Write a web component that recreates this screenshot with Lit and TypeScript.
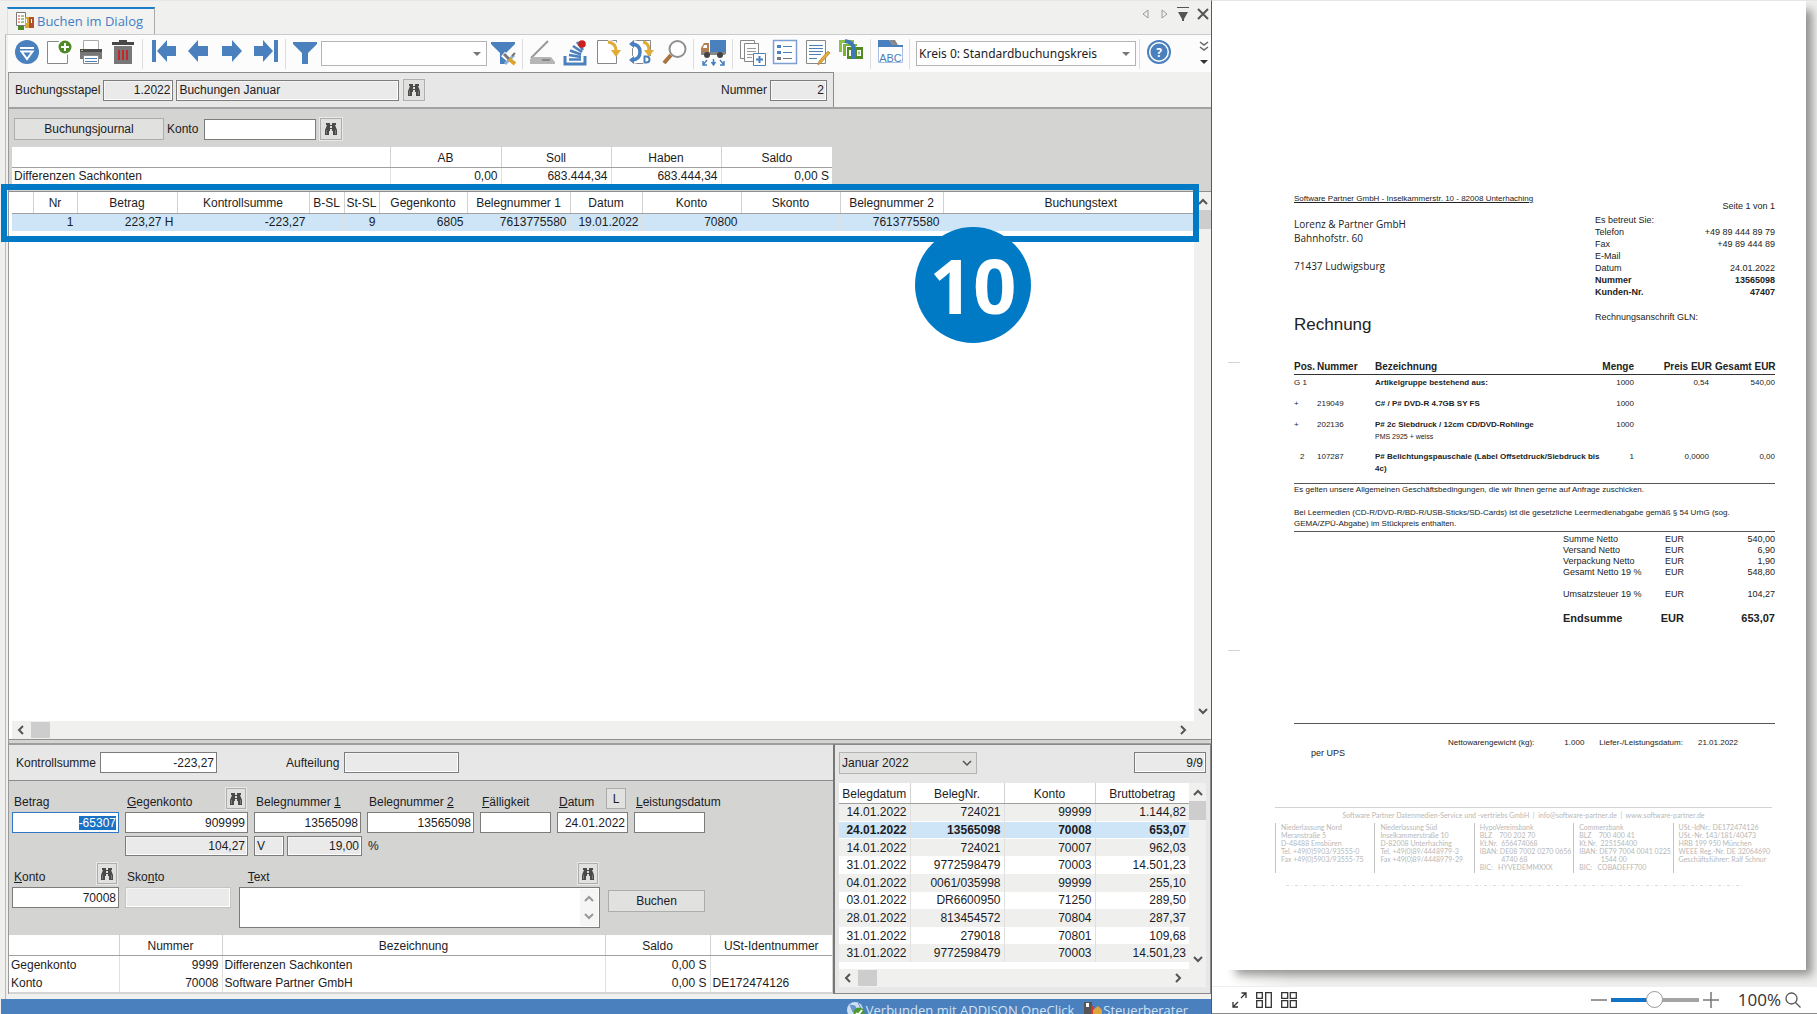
import { LitElement, html, css, svg, nothing } from "lit";
import { customElement } from "lit/decorators.js";
import { classMap } from "lit/directives/class-map.js";

const BLUE = "#4a80be";

const icon = (w: number, h: number, body: unknown) =>
  html`<svg width=${w} height=${h} viewBox="0 0 ${w} ${h}" aria-hidden="true">${body}</svg>`;

const binoculars = icon(12, 12, svg`
  <path fill="#4a4a4a" d="M1 0h4v2h2V0h4v2h-1l2 5v5H8V8H7V6H5v2H4v4H0V7l2-5H1z"/>
  <path fill="#ddd" d="M5 3h2v2H5z"/><path stroke="#aaa" d="M1.500 7v4M10.500 7v4" opacity=".5"/>`);

const money = svg`
  <path fill="#8cbf45" d="M0 0h15v4H3v8H0z"/><path fill="#fff" d="M3 3h15v1H4v12H3z"/>
  <path fill="#7ab336" d="M4 4h14v3H7v9H4z"/><path fill="#fff" d="M7 6h15v1H8v12H7z"/>
  <path fill="#4f8a22" d="M8 7h16v12H8z"/>
  <path d="M6 1q9 1 9 9v9" fill="none" stroke="#3f79b5" stroke-width="4"/>
  <path fill="#fff" d="M10 10h2v6h-2zM18 10h4v6h-4z"/><path fill="#4f8a22" d="M19.500 11.500h1v3h-1z"/>`;

const I = {
  menu: svg`<circle cx="12" cy="12" r="12" fill=${BLUE}/><path stroke="#fff" stroke-width="2" d="M5 8h14"/>
    <path d="M6.500 11.500h11L12 19z" fill=${BLUE} stroke="#fff" stroke-width="2"/>`,
  add: svg`<path d="M.5 1.500h20v22H.5z" fill="#fff" stroke="#888"/><circle cx="18" cy="7" r="8" fill="#fff"/><circle cx="18" cy="7" r="6.500" fill="#4d8a25"/>
    <path d="M18 3v8M14 7h8" stroke="#fff" stroke-width="2"/>`,
  print: svg`<path d="M4.500.5h15v10h-15z" fill="#fff" stroke="#aaa"/><path d="M1 9h22v10H1z" fill="#777"/><path d="M1 9h22v3H1z" fill="#4c4c4c"/>
    <path d="M2 10h2v1H2z" fill="#8c4"/><path d="M4.500 15.500h15v8h-15z" fill="#fff" stroke="#888"/><path d="M6 18.500h12M6 21.500h12" stroke=${BLUE}/>`,
  trash: svg`<path d="M1 2h22v3H1zM8 0h8v3H8z" fill="#484848"/><path d="M3 6h18v18H3z" fill="#777"/>
    <path d="M8 10v10M12 10v10M16 10v10" stroke="#c3262b" stroke-width="2"/>`,
  first: svg`<path fill=${BLUE} d="M0 0h4v22H0zM5 11L15 0v6h9v10h-9v6z"/>`,
  prev: svg`<path fill=${BLUE} d="M2 11L12 0v6h10v10H12v6z"/>`,
  next: svg`<path fill=${BLUE} d="M22 11L12 0v6H2v10h10v6z"/>`,
  last: svg`<path fill=${BLUE} d="M20 0h4v22h-4zM19 11L9 0v6H0v10h9v6z"/>`,
  filter: svg`<path fill=${BLUE} d="M0 2h24v2l-9 9v11H9V13L0 4z"/>`,
  filterTools: svg`<path fill=${BLUE} d="M0 2h24v2l-9 9v11H9V13L0 4z"/><path d="M12 14l12 10" stroke="#fff" stroke-width="6"/>
    <path d="M14 24l9-9" stroke="#8bb0dc" stroke-width="3"/><path d="M13 14l5 5" stroke="#777" stroke-width="3"/><path d="M18 19l6 5" stroke="#dba52f" stroke-width="4"/>
    <path d="M21 16l3-3" stroke="#777" stroke-width="2"/>`,
  scan: svg`<path d="M1 18L18 1" stroke="#999" stroke-width="2"/><path d="M0 19l4-2h17l4 5v2H0z" fill="#b5b5b5"/><path d="M12 20h8" stroke="#888" stroke-width="2"/>`,
  stack: svg`<path d="M2 16v8h20v-8" fill="none" stroke=${BLUE} stroke-width="3"/>
    <path d="M6 19.500h12M6 15l12 2M7 10.500l11 4M10 6l9 6M14 2l6 8" stroke=${BLUE} stroke-width="2.600"/><circle cx="19" cy="4" r="3.800" fill="#cf1f1c"/>`,
  docArrow: svg`<path d="M1.500.5h19v23h-19z" fill="#fff" stroke="#888"/><path d="M12 3q9 0 9 8" fill="none" stroke="#fff" stroke-width="6"/>
    <path d="M12 2q8 1 8 9" fill="none" stroke="#dfac35" stroke-width="3"/><path d="M15 10h10l-5 7z" fill="#dfac35"/>`,
  docSync: svg`<path d="M3.500.5h18v23h-18z" fill="#fff" stroke="#888"/><path d="M2 4q9 0 9 8t-9 8" fill="none" stroke="#fff" stroke-width="8"/><path d="M2 4q9 0 9 8t-9 8" fill="none" stroke=${BLUE} stroke-width="3.500"/>
    <path d="M0 4l5-4v8zM0 20l5-4v8z" fill=${BLUE}/><path d="M14 2q6 1 6 9" fill="none" stroke="#dfac35" stroke-width="3"/><path d="M15 10h10l-5 7z" fill="#dfac35"/>
    <path d="M14 16h8v8h-8z" fill="#fff"/><path d="M15.500 16.500h2q3 0 3 3t-3 3h-2z" fill="none" stroke=${BLUE} stroke-width="2"/>`,
  search: svg`<path d="M2 23l7-8" stroke="#a9743f" stroke-width="4"/><circle cx="15.500" cy="9" r="8" fill="#fff" stroke="#8f8f8f" stroke-width="2"/>`,
  truck: svg`<path d="M9 0h16v14H9z" fill=${BLUE}/><path d="M0 13V8l3-5h5v11H0z" fill="#b3814f"/><path d="M3 5h3v3H2z" fill="#fff"/><path d="M0 12h24v3H0z" fill="#888"/>
    <circle cx="6" cy="15" r="3" fill="#444"/><circle cx="19" cy="15" r="3" fill="#444"/>
    <path d="M6 20l-4 5m0-4v4h4M12.500 19v6m-2-3l2 3 2-3M19 20l4 5m0-4v4h-4" fill="none" stroke=${BLUE} stroke-width="1.500"/>`,
  copy: svg`<path d="M.5.5h14v18H.5z" fill="#fff" stroke="#888"/><path d="M4.500 3.500h14v18h-14z" fill="#fff" stroke="#888"/><path d="M7 8.500h9M7 11.500h9M7 14.500h6M7 17.500h5" stroke="#999"/>
    <path d="M13.500 13.500h12v12h-12z" fill="#fff" stroke=${BLUE}/><path d="M19.500 16v7M16 19.500h7" stroke=${BLUE} stroke-width="2"/>`,
  list: svg`<path d="M.5.500h23v23H.5z" fill="#fff" stroke="#7f9fd2" stroke-width="1.500"/><path d="M4 5h4v3H4zM4 11h4v3H4z" fill=${BLUE}/><path d="M4 17h4v3H4z" fill="#777"/>
    <path d="M10 6.500h9M10 12.500h9" stroke=${BLUE}/><path d="M10 18.500h9" stroke="#777"/>`,
  note: svg`<path d="M.5.500h19v23H.5z" fill="#fff" stroke="#888"/><path d="M3 5.500h14M3 8.500h14M3 11.500h14M3 14.500h12M3 18.500h8" stroke=${BLUE}/>
    <path d="M24 13l-9 10-3 2 1-4 9-10z" fill="#dfac35" stroke="#a9743f" stroke-width=".6"/>`,
  abc: svg`<path d="M.5 5.500h24v17H.500z" fill="#fff" stroke="#a9bfe2"/><path d="M0 0h11l4 5h10v2H0z" fill=${BLUE}/><path d="M11 0h6l3 5h-5z" fill="#888"/>
    <text x="12.500" y="22" font-size="11" font-family="Liberation Sans" text-anchor="middle" fill=${BLUE}>ABC</text>`,
  help: svg`<circle cx="12" cy="12" r="11" fill="#fff" stroke=${BLUE} stroke-width="2"/><circle cx="12" cy="12" r="8.500" fill=${BLUE}/>
    <text x="12" y="16.500" font-size="12" font-weight="bold" font-family="Noto Sans" text-anchor="middle" fill="#fff">?</text>`,
};

const tool = (label: string, body: unknown) => html`<button class="tool" aria-label=${label}>${icon(26, 26, body)}</button>`;
const find = (label: string) => html`<button class="find" aria-label=${label}>${binoculars}</button>`;
const chevron = (dir: "up" | "down" | "left" | "right") => {
  const d = { up: "M1 7l4-4 4 4", down: "M1 3l4 4 4-4", left: "M7 1L3 5l4 4", right: "M3 1l4 4-4 4" }[dir];
  return icon(10, 10, svg`<path d=${d} fill="none" stroke="#555" stroke-width="2"/>`);
};

const BOOKING_COLS: [string, string, number][] = [
  ["", "", 21], ["Nr", "1", 44], ["Betrag", "223,27 H", 100], ["Kontrollsumme", "-223,27", 132], ["B-SL", "", 35],
  ["St-SL", "9", 35], ["Gegenkonto", "6805", 88], ["Belegnummer 1", "7613775580", 103], ["Datum", "19.01.2022", 72],
  ["Konto", "70800", 99], ["Skonto", "", 99], ["Belegnummer 2", "7613775580", 103], ["Buchungstext", "", 0],
];

const VOUCHERS = [
  ["14.01.2022", "724021", "99999", "1.144,82"],
  ["24.01.2022", "13565098", "70008", "653,07"],
  ["14.01.2022", "724021", "70007", "962,03"],
  ["31.01.2022", "9772598479", "70003", "14.501,23"],
  ["04.01.2022", "0061/035998", "99999", "255,10"],
  ["03.01.2022", "DR6600950", "71250", "289,50"],
  ["28.01.2022", "813454572", "70804", "287,37"],
  ["31.01.2022", "279018", "70801", "109,68"],
  ["31.01.2022", "9772598479", "70003", "14.501,23"],
];

const INFO: [string, string, boolean][] = [
  ["Es betreut Sie:", "", false], ["Telefon", "+49 89 444 89 79", false], ["Fax", "+49 89 444 89", false], ["E-Mail", "", false],
  ["Datum", "24.01.2022", false], ["Nummer", "13565098", true], ["Kunden-Nr.", "47407", true],
];

const ITEMS = [
  { pos: "G 1", nr: "", text: "Artikelgruppe bestehend aus:", note: "", qty: "1000", price: "0,54", sum: "540,00" },
  { pos: "+", nr: "219049", text: "C# / P# DVD-R 4.7GB SY FS", note: "", qty: "1000", price: "", sum: "" },
  { pos: "+", nr: "202136", text: "P# 2c Siebdruck / 12cm CD/DVD-Rohlinge", note: "PMS 2925 + weiss", qty: "1000", price: "", sum: "" },
  { pos: "2", nr: "107287", text: "P# Belichtungspauschale (Label Offsetdruck/Siebdruck bis 4c)", note: "", qty: "1", price: "0,0000", sum: "0,00" },
];

const TOTALS = [
  ["Summe Netto", "540,00", ""], ["Versand Netto", "6,90", ""], ["Verpackung Netto", "1,90", ""], ["Gesamt Netto 19 %", "548,80", ""],
  ["Umsatzsteuer 19 %", "104,27", "tax"], ["Endsumme", "653,07", "grand"],
];

const IMPRINT = [
  ["Niederlassung Nord", "Meranstraße 5", "D-48488 Emsbüren", "Tel. +49(0)5903/93555-0", "Fax +49(0)5903/93555-75"],
  ["Niederlassung Süd", "Inselkammerstraße 10", "D-82008 Unterhaching", "Tel. +49(0)89/4448979-3", "Fax +49(0)89/4448979-29"],
  ["HypoVereinsbank", "BLZ    700 202 70", "Kt.Nr.  656474068", "IBAN: DE08 7002 0270 0656", "            4740 68", "BIC:   HYVEDEMMXXX"],
  ["Commerzbank", "BLZ    700 400 41", "Kt.Nr.  225154400", "IBAN: DE79 7004 0041 0225", "            1544 00", "BIC:   COBADEFF700"],
  ["USt.-IdNr.: DE172474126", "USt.-Nr. 143/181/40473", "HRB 199 950 München", "WEEE Reg.-Nr. DE 32064690", "Geschäftsführer: Ralf Schnur"],
];

@customElement("invoice-viewer")
export class InvoiceViewer extends LitElement {
  static styles = css`
    :host { display: flex; flex-direction: column; min-width: 0; background: #fff; font-family: "Liberation Sans", Arial, sans-serif; color: #222; box-sizing: border-box; border-top: 1px solid #e6e6e6; border-bottom: 1px solid #8a8a8a; }
    * { box-sizing: border-box; }
    .stage { flex: 1; min-height: 0; display: flex; padding: 0 11px 16px 14px; overflow: hidden; background: linear-gradient(90deg, #fff 0, #fff 14px, #efefed 80px); }
    .page { position: relative; flex: 1; min-width: 0; background: #fff; box-shadow: 8px 7px 9px -2px rgba(0, 0, 0, 0.4); padding: 192px 31px 0 49px; font-size: 9px; }
    .mark { position: absolute; left: 2px; width: 12px; height: 1px; background: #d5d5d5; }
    .mark.a { top: 361px; }
    .mark.b { top: 649px; }
    .sheet { padding-left: 19px; }
    .head { display: flex; justify-content: space-between; height: 167px; }
    .sender { font-size: 8px; line-height: 12px; text-decoration: underline; white-space: nowrap; }
    .address { margin: 12px 0 41px; font: 10px/14px "Open Sans", sans-serif; }
    h1 { margin: 0; font-size: 17px; line-height: 22px; font-weight: 400; }
    .meta { width: 180px; padding-top: 7px; line-height: 12px; }
    .pageno { text-align: right; margin-bottom: 2px; }
    .pair { display: flex; justify-content: space-between; height: 12px; }
    .bold { font-weight: 700; }
    .gln { margin-top: 13px; }
    table { border-collapse: collapse; table-layout: fixed; width: 100%; }
    th, td { padding: 0; text-align: left; vertical-align: top; }
    .r { text-align: right; }
    .items { font-size: 8px; line-height: 12px; }
    .items th { font-size: 10px; line-height: 14px; border-bottom: 1px solid #333; white-space: nowrap; }
    .items td { padding: 2px 0 7px; }
    .items .edge { padding-right: 6px; }
    .items th.cost { padding-right: 3px; }
    .items .indent { padding-left: 6px; }
    .items .name { font-weight: 700; }
    .note { font-size: 7px; line-height: 11px; font-weight: 400; }
    .terms { border-top: 1px solid #555; border-bottom: 1px solid #555; margin-top: 1px; height: 49px; font-size: 8px; line-height: 11px; white-space: nowrap; }
    .terms p { margin: 0 0 12px; }
    .totals { width: 212px; margin: 2px 0 0 auto; line-height: 11px; }
    .totals .tax td { padding-top: 11px; }
    .totals .grand td { padding-top: 11px; font-size: 11px; line-height: 14px; font-weight: 700; }
    .ship { margin-top: 98px; border-top: 1px solid #555; padding: 14px 0 0 17px; height: 84px; line-height: 10px; }
    .weights { display: flex; justify-content: flex-end; gap: 15px; padding-right: 37px; font-size: 8px; line-height: 10px; }
    .imprint { border-top: 1px solid #d2d2d2; margin-right: 3px; color: #b8b8b8; font: 7px/8px Lato, sans-serif; }
    .imprint .line { text-align: center; line-height: 14px; }
    .cols { display: grid; grid-template-columns: repeat(5, minmax(0, 1fr)); padding-top: 1px; }
    .cols div { border-left: 1px solid #c4c4c4; padding-left: 5px; height: 50px; white-space: pre; overflow: hidden; }
    .speck { height: 1px; margin: 12px 28px 0 11px; background: repeating-linear-gradient(90deg, #dcdcdc 0 3px, #fff 3px 5px, #e4e4e4 5px 6px, #fff 6px 9px); }
    .bar { height: 27px; display: flex; align-items: center; padding: 0 16px 1px 20px; gap: 9px; background: #fff; border-top: 1px solid #eee; font: 17px/20px "Open Sans", sans-serif; color: #333; }
    button { border: 0; background: none; padding: 0; display: flex; color: inherit; }
    .space { flex: 1; }
    .zoom { appearance: none; width: 88px; height: 18px; margin: 0 -5px; background: linear-gradient(90deg, #1174c4 50%, #a3a3a3 50%) center / 100% 4px no-repeat; }
    .zoom::-webkit-slider-thumb { appearance: none; width: 17px; height: 17px; border-radius: 50%; background: #fff; border: 1px solid #999; }
    output { margin: 0 -5px 0 10px; }
  `;

  render() {
    return html`
      <div class="stage">
        <article class="page">
          <i class="mark a"></i><i class="mark b"></i>
          <div class="sheet">
            <div class="head">
              <div>
                <div class="sender">Software Partner GmbH - Inselkammerstr. 10 - 82008 Unterhaching</div>
                <div class="address">Lorenz &amp; Partner GmbH<br />Bahnhofstr. 60<br /><br />71437 Ludwigsburg</div>
                <h1>Rechnung</h1>
              </div>
              <div class="meta">
                <div class="pageno">Seite 1 von 1</div>
                ${INFO.map(([k, v, b]) => html`<div class=${classMap({ pair: true, bold: b })}><span>${k}</span><span>${v}</span></div>`)}
                <div class="gln">Rechnungsanschrift GLN:</div>
              </div>
            </div>
            <table class="items">
              <colgroup><col style="width:23px" /><col style="width:58px" /><col /><col style="width:34px" /><col style="width:81px" /><col style="width:60px" /></colgroup>
              <thead><tr><th>Pos.</th><th>Nummer</th><th>Bezeichnung</th><th class="r">Menge</th><th class="r cost">Preis EUR</th><th class="r">Gesamt EUR</th></tr></thead>
              <tbody>
                ${ITEMS.map((i) => html`<tr>
                  <td class=${classMap({ indent: i.pos === "2" })}>${i.pos}</td><td>${i.nr}</td>
                  <td class="name">${i.text}${i.note ? html`<div class="note">${i.note}</div>` : nothing}</td>
                  <td class="r">${i.qty}</td><td class="r edge">${i.price}</td><td class="r">${i.sum}</td>
                </tr>`)}
              </tbody>
            </table>
            <div class="terms">
              <p>Es gelten unsere Allgemeinen Geschäftsbedingungen, die wir Ihnen gerne auf Anfrage zuschicken.</p>
              <p>Bei Leermedien (CD-R/DVD-R/BD-R/USB-Sticks/SD-Cards) ist die gesetzliche Leermedienabgabe gemäß § 54 UrhG (sog.<br />GEMA/ZPÜ-Abgabe) im Stückpreis enthalten.</p>
            </div>
            <table class="totals">
              <colgroup><col style="width:90px" /><col style="width:31px" /><col /></colgroup>
              <tbody>${TOTALS.map(([k, v, c]) => html`<tr class=${c}><td>${k}</td><td class="r">EUR</td><td class="r">${v}</td></tr>`)}</tbody>
            </table>
            <div class="ship">
              <div class="weights"><span>Nettowarengewicht (kg):</span><span></span><span>1.000</span><span>Liefer-/Leistungsdatum:</span><span>21.01.2022</span></div>
              per UPS
            </div>
          </div>
          <footer class="imprint">
            <div class="line">Software Partner Datenmedien-Service und -vertriebs GmbH &nbsp;|&nbsp; info@software-partner.de &nbsp;|&nbsp; www.software-partner.de</div>
            <div class="cols">${IMPRINT.map((c) => html`<div>${c.join("\n")}</div>`)}</div>
            <div class="speck"></div>
          </footer>
        </article>
      </div>
      <div class="bar">
        <button aria-label="Vollbild">${icon(15, 16, svg`<path d="M9 6l5-5M9.500 1H14v5M6 10l-5 5M1 10v5h5" fill="none" stroke="#333" stroke-width="1.300"/>`)}</button>
        <button aria-label="Seitenansicht">${icon(16, 16, svg`<path d="M.7.700h5.600v5.600H.7zM.7 8.700h5.600v6.600H.7zM9.700.700h5.600v14.600H9.700z" fill="none" stroke="#333" stroke-width="1.300"/>`)}</button>
        <button aria-label="Kachelansicht">${icon(16, 16, svg`<path d="M.7.700h6v5.600h-6zM.7 8.700h6v6.600h-6zM9.300.700h6v5.600h-6zM9.300 8.700h6v6.600h-6z" fill="none" stroke="#333" stroke-width="1.300"/>`)}</button>
        <span class="space"></span>
        <button aria-label="Verkleinern">${icon(16, 16, svg`<path d="M0 8h16" stroke="#777" stroke-width="1.500"/>`)}</button>
        <input class="zoom" type="range" min="0" max="200" .value=${"100"} aria-label="Zoom" />
        <button aria-label="Vergrößern">${icon(16, 16, svg`<path d="M0 8h16M8 0v16" stroke="#777" stroke-width="1.500"/>`)}</button>
        <output>100%</output>
        <button aria-label="Suchen">${icon(16, 16, svg`<circle cx="6.500" cy="6.500" r="5.500" fill="none" stroke="#555" stroke-width="1.300"/><path d="M10.500 10.500l5 5" stroke="#555" stroke-width="1.300"/>`)}</button>
      </div>
    `;
  }
}

@customElement("app-root")
export class AppRoot extends LitElement {
  static styles = css`
    :host { display: grid; grid-template-columns: minmax(0, 1212fr) minmax(0, 605fr); grid-template-rows: minmax(0, 1fr); height: 100vh; font: 12px/16px "Liberation Sans", Arial, sans-serif; color: #1c1c24; background: #f0f0ee; }
    * { box-sizing: border-box; }
    button, input, select, textarea { font: inherit; color: inherit; margin: 0; border-radius: 0; }
    .app { display: flex; flex-direction: column; min-width: 0; border-right: 1px solid #1a6aa8; border-top: 1px solid #e6e6e6; }
    .tabs { height: 33px; display: flex; justify-content: space-between; padding: 6px 2px 0 7px; }
    .tab { width: 148px; height: 27px; display: flex; align-items: center; gap: 2px; padding: 0 0 1px 8px; border: 0; border-top: 2px solid #1a7dc8; border-right: 1px solid #aaa; border-left: 1px solid #ddd; background: #f2f2f0; color: #3f7fc4; font: 13px/18px "Open Sans", sans-serif; white-space: nowrap; }
    .wins { display: flex; align-items: center; gap: 8px; height: 14px; }
    .wins button, .more { border: 0; background: none; padding: 0; display: flex; }
    .frame { flex: 1; min-height: 0; display: flex; flex-direction: column; margin-left: 5px; border-left: 1px solid #bbb; border-top: 1px solid #ccc; padding: 0 0 5px 2px; }
    .tools { height: 37px; flex: none; background: #fcfcfc; display: flex; align-items: center; padding: 0 2px 0 3px; }
    .tool { width: 32px; height: 32px; padding: 2px 0 0 4px; border: 0; background: none; display: flex; }
    .tool svg { overflow: visible; }
    .grp { display: flex; gap: 1px; }
    .grp.tight { gap: 0; }
    .grp.wide { gap: 2px; padding-left: 2px; }
    .sep { width: 1px; height: 30px; background: #ddd; margin: 0 3px; }
    .combo { position: relative; display: flex; }
    .combo select { appearance: none; width: 100%; height: 100%; border: 1px solid #b4b4b4; background: #fff; padding: 0 2px; font: 12px/20px "Open Sans", sans-serif; }
    .combo svg { position: absolute; right: 5px; top: 50%; margin-top: -5px; pointer-events: none; }
    .quick { width: 166px; height: 25px; }
    .circle { width: 220px; height: 25px; margin-left: 3px; }
    .circle select { font-family: "Noto Sans", sans-serif; }
    .more { flex-direction: column; gap: 5px; margin-left: auto; }
    .work { flex: 1; min-height: 0; display: flex; flex-direction: column; border-left: 1px solid #999; }
    .batch { height: 37px; flex: none; border-bottom: 2px solid #a2a2a2; }
    .batch-in { width: 825px; max-width: 100%; height: 35px; display: flex; align-items: center; gap: 3px; padding: 0 6px 0 6px; border: 1px solid #8c8c8c; border-width: 1px 1px 0 0; background: #e7e7e7; }
    label { white-space: nowrap; }
    input, textarea { border: 1px solid #7c7c7c; background: #fff; height: 21px; padding: 0 2px; min-width: 0; outline: 0; text-align: right; }
    input[readonly] { background: #eaeaea; box-shadow: inset -1px -1px #fff, inset 1px 1px #f6f6f6; }
    .left { text-align: left; }
    .push { margin-left: auto; }
    .find { width: 22px; height: 22px; flex: none; display: flex; align-items: center; justify-content: center; border: 1px solid #aeaeae; background: #e1e1e0; padding: 0; box-shadow: 0 0 0 1px #e9e9e9; }
    .batch-in .find { margin-left: 1px; }
    .btn { border: 1px solid #adadad; background: #e1e1e0; height: 22px; padding: 0; text-align: center; }
    .journal { flex: none; background: #d4d4d2; height: 82px; padding: 9px 0 0 3px; }
    .jrow { display: flex; align-items: center; gap: 3px; margin: 0 0 7px 2px; height: 22px; }
    .jrow label { width: 34px; }
    .jrow .find { margin-left: 1px; }
    table { border-collapse: collapse; table-layout: fixed; background: #fff; }
    th { font-weight: 400; text-align: center; padding: 2px 0 0; height: 21px; border-bottom: 1px solid #a0a0a0; border-left: 1px solid #d2d2d2; white-space: nowrap; }
    td { text-align: right; padding: 0 3px 0 2px; border-left: 1px solid #e0e0e0; white-space: nowrap; }
    th:first-child, td:first-child { border-left: 0; }
    td.left { text-align: left; }
    .balance { width: 820px; }
    .balance th, .accounts th { height: 20px; }
    .balance td { height: 16px; }
    .grid { flex: 1; min-height: 0; position: relative; display: grid; grid-template: minmax(0, 1fr) 18px / minmax(0, 1fr) 17px; border-top: 1px solid #8e8e8e; border-bottom: 1px solid #8e8e8e; padding-left: 3px; background: #fff; }
    .booking { width: 100%; align-self: start; }
    .booking th:last-child { padding-left: 24px; }
    .booking td { background: #cde5f6; height: 18px; border-top: 1px solid #fff; }
    .vbar { background: #f0f0ef; display: flex; flex-direction: column; align-items: center; padding: 5px 0; }
    .vbar .thumb { width: 100%; height: 19px; background: #cdcdcd; margin: 3px 0 auto; }
    .hbar { background: #f0f0ef; display: flex; align-items: center; padding: 0 23px 0 4px; grid-column: 1 / -1; height: 18px; }
    .hbar .thumb { width: 19px; height: 16px; background: #cdcdcd; margin: 0 auto 0 5px; }
    .mark { position: absolute; left: -8px; right: 12px; top: -8px; height: 58px; border: 6px solid #007ac5; pointer-events: none; }
    .step { position: absolute; left: 906px; top: 35px; width: 116px; height: 116px; border-radius: 50%; background: #007ac5; color: #fff; font: 700 76px/116px "Open Sans", sans-serif; text-align: center; }
    .split { height: 5px; flex: none; background: #d4d4d2; border-bottom: 2px solid #9e9e9e; }
    .bottom { flex: none; display: grid; grid-template-columns: minmax(0, 824fr) minmax(0, 378fr); }
    .entry { background: #d4d4d2; min-width: 0; }
    .sumbar { height: 36px; display: flex; align-items: center; background: #e7e7e7; border-bottom: 1px solid #8c8c8c; padding-left: 7px; }
    .sumbar label:first-child { width: 84px; }
    .w117 { width: 117px; }
    .w115 { width: 115px; }
    .auft { margin: 0 5px 0 69px; }
    .form { padding: 7px 0 7px 3px; }
    .fields { display: flex; gap: 6px; }
    .f { display: flex; flex-direction: column; width: 107px; }
    .f.g { width: 123px; }
    .f.s { width: 71px; }
    .f.t { width: 361px; margin-left: 2px; }
    .f.k { width: 106px; }
    .cap { height: 24px; display: flex; align-items: flex-end; justify-content: space-between; padding: 0 2px 2px 2px; }
    .cap .find { margin-bottom: 1px; width: 20px; height: 21px; }
    .cap .btn { width: 20px; height: 21px; margin-bottom: 1px; }
    .active { border: 1px solid #2f78c8; background: #fff; height: 21px; }
    .active::selection { background: #1a72c4; color: #fff; }
    .sub { display: flex; gap: 6px; margin: 3px 0 7px 113px; align-items: center; }
    .sub input { height: 20px; }
    .w30 { width: 30px; }
    .w75 { width: 75px; margin-left: -3px; }
    .plain[readonly] { border-color: #c4c4c4; }
    .area { position: relative; display: flex; }
    textarea { width: 100%; height: 41px; resize: none; overflow: hidden; text-align: left; }
    .area .vbar { position: absolute; right: 2px; top: 2px; bottom: 2px; width: 18px; justify-content: space-between; opacity: 0.6; }
    .book { width: 97px; margin: 27px 0 0 2px; }
    .accounts { width: calc(100% - 1px); height: 57px; }
    .accounts td { height: 18px; }
    .vouchers { display: flex; flex-direction: column; min-width: 0; margin-top: -1px; height: 250px; border: 1px solid #8a8a8a; border-left: 2px solid #777; background: #e7e7e7; padding: 7px 4px 0; }
    .vtop { display: flex; justify-content: space-between; height: 22px; margin-bottom: 9px; }
    .month { width: 138px; }
    .month select { background: #e1e1e0; font: inherit; }
    .count { width: 72px; }
    .vgrid { display: grid; grid-template-columns: minmax(0, 1fr) 17px; }
    .vlist { background: #fff; height: 186px; }
    .vlist table { width: 100%; height: 179px; }
    .vlist th { height: 20px; }
    .vlist tbody tr:nth-child(odd) { background: #efefee; }
    .vlist td { line-height: 14px; }
    .vlist tbody .sel { background: #cde5f6; font-weight: 700; box-shadow: inset 0 1px #fff, inset 0 -1px #fff; }
    .status { flex: none; height: 15px; overflow: hidden; display: flex; justify-content: flex-end; background: #4a80be; color: #d5e3f3; font: 13px/18px "Open Sans", sans-serif; padding: 2px 23px 0 0; gap: 10px; margin-left: 1px; }
    .status span { display: flex; gap: 1px; white-space: nowrap; }
  `;

  firstUpdated() {
    const amount = this.renderRoot.querySelector<HTMLInputElement>("#amount");
    amount?.focus();
    amount?.select();
  }

  private vbar() {
    return html`<div class="vbar">${chevron("up")}<i class="thumb"></i>${chevron("down")}</div>`;
  }

  private hbar() {
    return html`<div class="hbar">${chevron("left")}<i class="thumb"></i>${chevron("right")}</div>`;
  }

  private toolbar() {
    const caret = icon(10, 10, svg`<path d="M1 3h8L5 7z" fill="#777"/>`);
    const sep = html`<i class="sep"></i>`;
    return html`<div class="tools" role="toolbar" aria-label="Buchen">
      <div class="grp tight">${tool("Menü", I.menu)}${tool("Neu", I.add)}${tool("Drucken", I.print)}${tool("Löschen", I.trash)}</div>${sep}
      <div class="grp wide">${tool("Erster", I.first)}${tool("Zurück", I.prev)}${tool("Weiter", I.next)}${tool("Letzter", I.last)}</div>${sep}
      ${tool("Filter", I.filter)}
      <div class="combo quick"><select aria-label="Filterauswahl"><option></option></select>${caret}</div>
      ${tool("Filter bearbeiten", I.filterTools)}${sep}
      <div class="grp">${tool("Scannen", I.scan)}${tool("Stapel", I.stack)}${tool("Beleg übernehmen", I.docArrow)}${tool("Dauerbeleg", I.docSync)}${tool("Suchen", I.search)}</div>${sep}
      ${tool("Verteilen", I.truck)}${sep}
      <div class="grp">${tool("Kopieren", I.copy)}${tool("Liste", I.list)}${tool("Notiz", I.note)}${tool("Zahlung", money)}</div>${sep}
      ${tool("Texte", I.abc)}${sep}
      <div class="combo circle"><select aria-label="Buchungskreis"><option>Kreis 0: Standardbuchungskreis</option></select>${caret}</div>${sep}
      ${tool("Hilfe", I.help)}
      <button class="more" aria-label="Weitere Symbole">
        ${icon(10, 12, svg`<path d="M1 1l4 3 4-3M1 6l4 3 4-3" fill="none" stroke="#666" stroke-width="1.500"/>`)}
        ${icon(10, 8, svg`<path d="M1 2h8L5 6z" fill="#333"/>`)}
      </button>
    </div>`;
  }

  private entryForm() {
    return html`<div class="form">
      <div class="fields">
        <div class="f"><div class="cap"><label for="amount">Betrag</label></div><input id="amount" class="active" .value=${"-65307"} /></div>
        <div class="f g"><div class="cap"><label for="contra"><u>G</u>egenkonto</label>${find("Gegenkonto suchen")}</div><input id="contra" .value=${"909999"} /></div>
        <div class="f"><div class="cap"><label for="doc1">Belegnummer <u>1</u></label></div><input id="doc1" .value=${"13565098"} /></div>
        <div class="f"><div class="cap"><label for="doc2">Belegnummer <u>2</u></label></div><input id="doc2" .value=${"13565098"} /></div>
        <div class="f s"><div class="cap"><label for="due"><u>F</u>älligkeit</label></div><input id="due" /></div>
        <div class="f s"><div class="cap"><label for="date"><u>D</u>atum</label><button class="btn">L</button></div><input id="date" .value=${"24.01.2022"} /></div>
        <div class="f s"><div class="cap"><label for="service"><u>L</u>eistungsdatum</label></div><input id="service" /></div>
      </div>
      <div class="sub">
        <input class="f g" readonly aria-label="Steuerbetrag" .value=${"104,27"} />
        <input class="w30 left" readonly aria-label="Steuerart" .value=${"V"} />
        <input class="w75" readonly aria-label="Steuersatz" .value=${"19,00"} /><span>%</span>
      </div>
      <div class="fields">
        <div class="f"><div class="cap"><label for="acct"><u>K</u>onto</label>${find("Konto suchen")}</div><input id="acct" .value=${"70008"} /></div>
        <div class="f k"><div class="cap"><label for="disc">Sko<u>n</u>to</label></div><input id="disc" class="plain" readonly /></div>
        <div class="f t">
          <div class="cap"><label for="text">&nbsp;&nbsp;<u>T</u>ext</label>${find("Text suchen")}</div>
          <div class="area"><textarea id="text"></textarea><div class="vbar">${chevron("up")}${chevron("down")}</div></div>
        </div>
        <button class="btn book">Buchen</button>
      </div>
    </div>`;
  }

  render() {
    return html`
      <main class="app">
        <div class="tabs">
          <button class="tab">
            ${icon(19, 19, svg`<path d="M.5.500h9v13h-9z" fill="#fff" stroke="#777"/><path d="M2 4h2M2 7h2M2 10h2" stroke="#c33"/><path d="M5 4h3M5 7h3M5 10h3" stroke="#4d8a25"/>
              <path d="M9 5h4v11H9z" fill="#dba52f"/><path d="M13 5h5v11h-5z" fill="#b0522c"/><path d="M10.500 7v4M15.500 7v4" stroke="#fff"/><path d="M2 14h6v4H2z" fill="#4d8a25"/>`)}
            Buchen im Dialog
          </button>
          <div class="wins">
            <button aria-label="Vorheriger Reiter">${icon(10, 12, svg`<path d="M7 2v8L2 6z" fill="none" stroke="#999"/>`)}</button>
            <button aria-label="Nächster Reiter">${icon(10, 12, svg`<path d="M3 2v8l5-4z" fill="none" stroke="#999"/>`)}</button>
            <button aria-label="Reiterliste">${icon(12, 14, svg`<path d="M0 .500h12" stroke="#555"/><path d="M1 5h10l-4 7v2H5v-2z" fill="#555"/>`)}</button>
            <button aria-label="Schließen">${icon(12, 12, svg`<path d="M1 1l10 10M11 1L1 11" stroke="#555" stroke-width="2"/>`)}</button>
          </div>
        </div>
        <div class="frame">
          ${this.toolbar()}
          <div class="work">
            <div class="batch"><div class="batch-in">
              <label for="batch">Buchungsstapel</label>
              <input id="batch" readonly style="width:70px" .value=${"1.2022"} />
              <input class="left" readonly aria-label="Stapelbezeichnung" style="width:223px" .value=${"Buchungen Januar"} />
              ${find("Stapel suchen")}
              <label class="push" for="num">Nummer</label>
              <input id="num" readonly style="width:57px" .value=${"2"} />
            </div></div>
            <div class="journal">
              <div class="jrow">
                <button class="btn" style="width:150px">Buchungsjournal</button>
                <label for="acc">Konto</label>
                <input id="acc" style="width:112px" />
                ${find("Konto suchen")}
              </div>
              <table class="balance">
                <colgroup><col /><col style="width:111px" /><col style="width:110px" /><col style="width:110px" /><col style="width:111px" /></colgroup>
                <thead><tr><th></th><th>AB</th><th>Soll</th><th>Haben</th><th>Saldo</th></tr></thead>
                <tbody><tr><td class="left">Differenzen Sachkonten</td><td>0,00</td><td>683.444,34</td><td>683.444,34</td><td>0,00 S</td></tr></tbody>
              </table>
            </div>
            <section class="grid">
              <table class="booking">
                <colgroup>${BOOKING_COLS.map(([, , w]) => (w ? html`<col style="width:${w}px" />` : html`<col />`))}</colgroup>
                <thead><tr>${BOOKING_COLS.map(([h]) => html`<th>${h}</th>`)}</tr></thead>
                <tbody><tr>${BOOKING_COLS.map(([, v]) => html`<td>${v}</td>`)}</tr></tbody>
              </table>
              ${this.vbar()}${this.hbar()}
              <div class="mark"></div>
              <div class="step">10</div>
            </section>
            <div class="split"></div>
            <div class="bottom">
              <section class="entry">
                <div class="sumbar">
                  <label for="sum">Kontrollsumme</label><input id="sum" class="w117" .value=${"-223,27"} />
                  <label for="split" class="auft">Aufteilung</label><input id="split" class="w115" readonly />
                </div>
                ${this.entryForm()}
                <table class="accounts">
                  <colgroup><col style="width:110px" /><col style="width:103px" /><col /><col style="width:105px" /><col style="width:122px" /></colgroup>
                  <thead><tr><th></th><th>Nummer</th><th>Bezeichnung</th><th>Saldo</th><th>USt-Identnummer</th></tr></thead>
                  <tbody>
                    <tr><td class="left">Gegenkonto</td><td>9999</td><td class="left">Differenzen Sachkonten</td><td>0,00 S</td><td></td></tr>
                    <tr><td class="left">Konto</td><td>70008</td><td class="left">Software Partner GmbH</td><td>0,00 S</td><td class="left">DE172474126</td></tr>
                  </tbody>
                </table>
              </section>
              <section class="vouchers">
                <div class="vtop">
                  <div class="combo month"><select aria-label="Monat"><option>Januar 2022</option></select>${icon(10, 10, svg`<path d="M1 3l4 4 4-4" fill="none" stroke="#555" stroke-width="1.500"/>`)}</div>
                  <input class="count" readonly aria-label="Belege" .value=${"9/9"} />
                </div>
                <div class="vgrid">
                  <div class="vlist"><table>
                    <colgroup><col style="width:71px" /><col style="width:94px" /><col style="width:91px" /><col /></colgroup>
                    <thead><tr><th>Belegdatum</th><th>BelegNr.</th><th>Konto</th><th>Bruttobetrag</th></tr></thead>
                    <tbody>${VOUCHERS.map((r, i) => html`<tr class=${classMap({ sel: i === 1 })}>${r.map((c) => html`<td>${c}</td>`)}</tr>`)}</tbody>
                  </table></div>
                  ${this.vbar()}${this.hbar()}
                </div>
              </section>
            </div>
          </div>
        </div>
        <footer class="status">
          <span>${icon(18, 18, svg`<circle cx="8" cy="9" r="8" fill="#cfe0f2"/><path d="M3 4l5 1 2 4-4 2zM11 2l3 5" fill="#6b98cf" stroke="#6b98cf"/><circle cx="12" cy="12" r="5.500" fill="#4d9a2c"/><path d="M9 12l2 2 4-5" fill="none" stroke="#fff" stroke-width="2"/>`)}Verbunden mit ADDISON OneClick</span>
          <span>${icon(18, 18, svg`<path d="M0 1h8v14H0z" fill="#555"/><path d="M2 2h3v4H2z" fill="#fff"/><path d="M7 5h3v8H7z" fill="#d33"/><path d="M9 9l5-4 4 4v8H9z" fill="#dfa53a"/>`)}Steuerberater</span>
        </footer>
      </main>
      <invoice-viewer></invoice-viewer>
    `;
  }
}
